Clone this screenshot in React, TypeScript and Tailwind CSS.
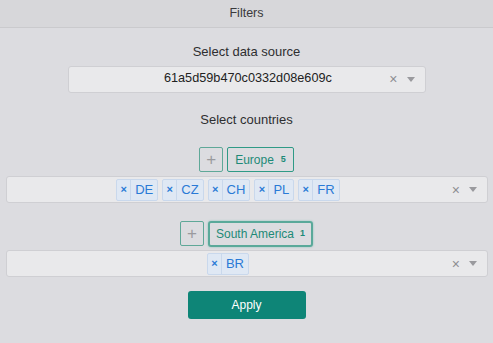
import React from 'react';

const font = { fontFamily: '"Liberation Sans", Arial, sans-serif' };

const Indicators: React.FC = () => (
  <div className="flex items-center gap-[9px] pr-[10px] text-[#8e8e92]">
    <span className="text-[14px] leading-none">×</span>
    <svg width="8" height="5" viewBox="0 0 8 5">
      <path d="M0 0 L8 0 L4 5 Z" fill="#9a9a9e" />
    </svg>
  </div>
);

const Chip: React.FC<{ label: string }> = ({ label }) => (
  <div className="flex h-[22px] items-stretch rounded-[2px] border border-[#c9d8ec] bg-[#dfe8f4] text-[#2a7ad6]">
    <span className="flex w-[14px] items-center justify-center border-r border-[#c9d8ec] text-[11px] font-bold">×</span>
    <span className="flex items-center px-[4px] text-[13px]">{label}</span>
  </div>
);

const PlusButton: React.FC = () => (
  <button className="flex h-[25px] w-[24px] items-center justify-center rounded-[2px] border border-[#5fa898] text-[17px] font-light leading-none text-[#9a9a9e]">
    +
  </button>
);

const MultiSelect: React.FC<{ values: string[] }> = ({ values }) => (
  <div className="mx-[6px] mr-[5px] flex h-[27px] items-center rounded-[3px] border border-[#cfcfd3] bg-[#e9e9eb]">
    <div className="flex flex-1 justify-center gap-[4px] pl-[6px]">
      {values.map(v => (
        <Chip key={v} label={v} />
      ))}
    </div>
    <div className="w-[9px]" />
    <Indicators />
  </div>
);

export default function App() {
  return (
    <div className="h-[343px] w-[493px] overflow-hidden bg-[#dcdce0] text-[#333]" style={font}>
      {/* Header */}
      <div className="flex h-[28px] items-center justify-center border-b border-[#cacacd] bg-[#d7d7da] text-[12.5px] text-[#3a3a3c]">
        Filters
      </div>

      <div className="pt-[14px] text-center text-[13px] text-[#2e2e30]">Select data source</div>
      <div className="mx-auto mt-[4px] flex h-[27px] w-[358px] items-center rounded-[3px] border border-[#cfcfd3] bg-[#e9e9eb]">
        <div className="flex-1 pl-[38px] text-center text-[12.7px] text-[#222]">61a5d59b470c0332d08e609c</div>
        <Indicators />
      </div>

      <div className="mt-[17px] text-center text-[13px] text-[#2e2e30]">Select countries</div>

      {/* Europe group */}
      <div className="mt-[18px] flex justify-center gap-[4px]">
        <PlusButton />
        <button className="flex h-[25px] items-center gap-[7px] rounded-[2px] border border-[#2f9a86] px-[7px] text-[12px] text-[#1d8a77]">
          <span>Europe</span>
          <span className="text-[9px] font-bold">5</span>
        </button>
      </div>
      <div className="mt-[4px]">
        <MultiSelect values={['DE', 'CZ', 'CH', 'PL', 'FR']} />
      </div>

      {/* South America group (focused) */}
      <div className="mt-[18px] flex justify-center gap-[4px]">
        <PlusButton />
        <button className="flex h-[26px] items-center gap-[6px] rounded-[3px] border-2 border-[#5aa99a] px-[6px] text-[12px] text-[#1d8a77] shadow-[0_0_2px_#7fc2b5]">
          <span>South America</span>
          <span className="text-[9px] font-bold">1</span>
        </button>
      </div>
      <div className="mt-[3px]">
        <MultiSelect values={['BR']} />
      </div>

      <div className="mt-[14px] flex justify-center">
        <button className="h-[28px] w-[118px] rounded-[3px] bg-[#0e8577] text-[12px] text-white">Apply</button>
      </div>
    </div>
  );
}
